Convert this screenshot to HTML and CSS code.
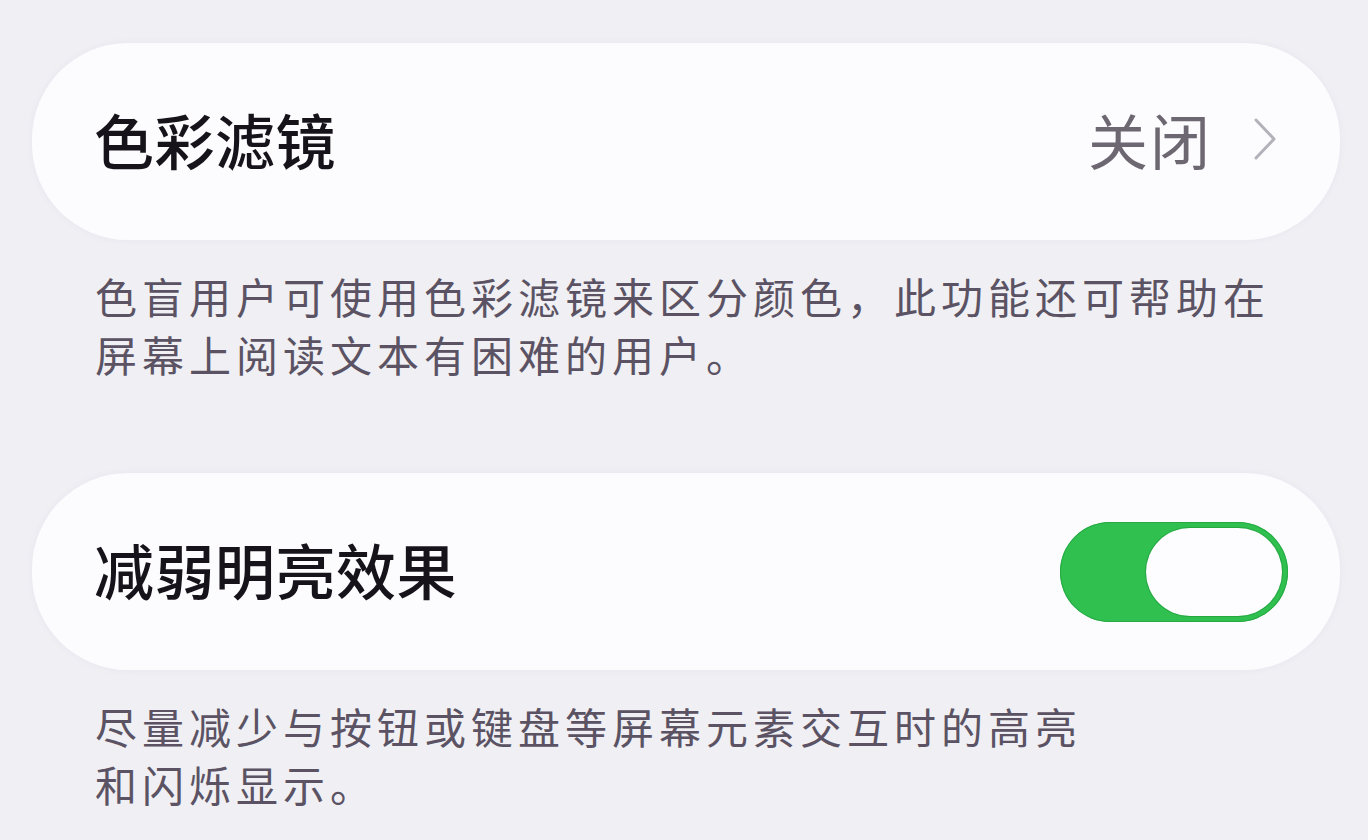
FILE: index.html
```html
<!DOCTYPE html>
<html lang="zh-CN">
<head>
    <meta charset="UTF-8">
    <meta name="viewport" content="width=device-width, initial-scale=1.0">
    <title>辅助功能</title>
    <link rel="stylesheet" href="styles.css">
</head>
<body>
    <div class="group">
        <div class="row">
            <span class="label">色彩滤镜</span>
            <span class="value">
                关闭
                <svg class="chevron" width="26" height="44" viewBox="0 0 26 44">
                    <polyline points="4,3 22,22 4,41" fill="none" stroke="#b3b1b9" stroke-width="3" stroke-linecap="round" stroke-linejoin="round"/>
                </svg>
            </span>
        </div>
        <p class="note">色盲用户可使用色彩滤镜来区分颜色，此功能还可帮助在<br>屏幕上阅读文本有困难的用户。</p>
    </div>

    <div class="group">
        <div class="row">
            <span class="label">减弱明亮效果</span>
            <div class="switch on">
                <div class="knob"></div>
            </div>
        </div>
        <p class="note">尽量减少与按钮或键盘等屏幕元素交互时的高亮<br>和闪烁显示。</p>
    </div>
</body>
</html>
```

FILE: styles.css
```css
body {
    font-family: "Noto Sans CJK SC", "Noto Sans", sans-serif;
    background-color: #efeff4;
    margin: 0;
    padding: 43px 28px 0 32px;
}
.group {
    margin-bottom: 90px;
}
.group:last-child {
    margin-bottom: 0;
}
.row {
    display: flex;
    align-items: center;
    justify-content: space-between;
    height: 197px;
    padding: 0 52px 0 62px;
    background: #fcfcfe;
    border-radius: 96px;
    box-shadow: 0 0 8px rgba(60, 60, 90, 0.04);
}
.label {
    padding-bottom: 6px;
    font-size: 60px;
    font-weight: 500;
    letter-spacing: 0.5px;
    color: #17131a;
    line-height: 1;
}
.value {
    display: flex;
    align-items: center;
    gap: 40px;
    padding: 0 10px 6px 0;
    font-size: 60px;
    letter-spacing: 2px;
    color: #6d6772;
    line-height: 1;
}
.chevron {
    display: block;
}
.note {
    margin: 0;
    padding: 27px 63px 0;
    font-size: 42px;
    line-height: 58px;
    letter-spacing: 5px;
    color: #5b5363;
}
.switch {
    display: flex;
    justify-content: flex-end;
    align-items: center;
    width: 228px;
    height: 100px;
    padding: 6px;
    box-sizing: border-box;
    border-radius: 50px;
    background: #d8d8de;
}
.switch.on {
    background: #30c050;
    box-shadow: inset 0 0 0 1px #27a944;
}
.knob {
    width: 136px;
    height: 88px;
    border-radius: 44px;
    background: #fdfdff;
    box-shadow: 0 0 0 1px rgba(20, 120, 40, 0.35);
}
```
